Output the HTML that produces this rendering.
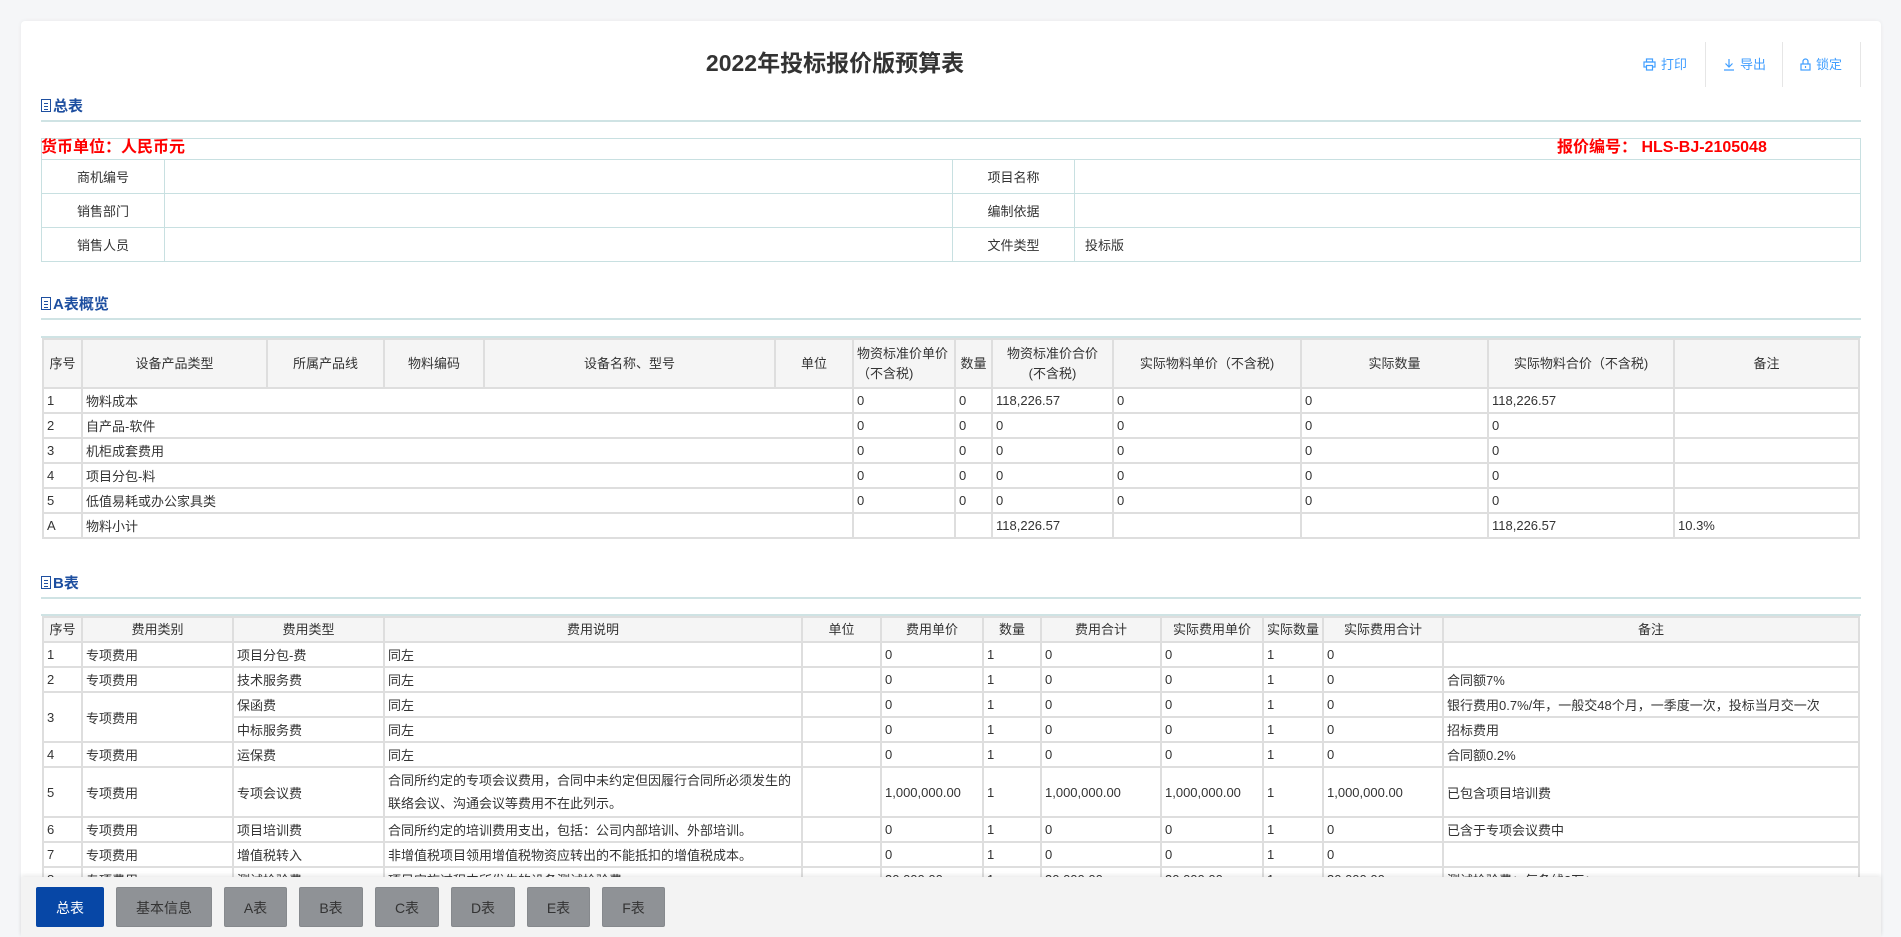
<!DOCTYPE html>
<html><head><meta charset="utf-8">
<style>
*{box-sizing:border-box;margin:0;padding:0}
html,body{width:1901px;height:937px;overflow:hidden}
body{background:#f5f6f8;font-family:"Liberation Sans","Noto Sans CJK SC",sans-serif;color:#333;font-size:13px;position:relative}
.card{position:absolute;left:21px;top:21px;width:1860px;height:916px;background:#fff;border-radius:4px;box-shadow:0 0 4px rgba(0,0,0,.06)}
.abs{position:absolute}
.title{left:600px;width:470px;top:48px;text-align:center;font-size:23px;font-weight:bold;color:#333;line-height:30px}
.tb{top:42px;height:45px;line-height:45px;color:#409eff;font-size:13px;border-right:1px solid #e6e6e6}
.tb svg{vertical-align:-2px;margin-right:5px}
.sec{left:41px;width:1820px;height:13px;font-size:15px;font-weight:bold;color:#1e4fa0;line-height:16px;border-bottom:2px solid #cfe3e4}
.sec span{position:relative;top:-10px}
.doc{display:inline-block;width:10px;height:13px;border:1.5px solid #1e4fa0;margin-right:2px;vertical-align:-1px;position:relative;top:-10px;background:linear-gradient(#1e4fa0,#1e4fa0) 2px 3px/4px 1px no-repeat,linear-gradient(#1e4fa0,#1e4fa0) 2px 6px/4px 1px no-repeat,linear-gradient(#1e4fa0,#1e4fa0) 2px 9px/4px 1px no-repeat}
table{border-collapse:collapse;table-layout:fixed;position:absolute}
.t0 td{border:1.5px solid #c8e0e1;height:34px;font-size:13px}
.t0 td.l{text-align:center}
.t0 td.v{padding-left:10px}
.ta td,.ta th,.tb2 td,.tb2 th{border:2px solid #dedede;font-size:13px;padding:0 3px;height:25px;white-space:nowrap;overflow:hidden;font-weight:normal}
.ta th,.tb2 th{background:#f5f5f5;text-align:center;line-height:20px}
.tb2 td.w{white-space:normal;line-height:23px;padding:1px 3px}
.bar{position:absolute;left:21px;top:877px;width:1860px;height:60px;background:#f3f3f3;box-shadow:0 -2px 4px rgba(0,0,0,.08)}
.btn{position:absolute;top:10px;height:40px;line-height:40px;text-align:center;background:#8f9296;color:#333;font-size:14px;border-radius:2px;border:1px solid #86898d}
.btn.on{background:#0747a6;color:#fff;border-color:#0747a6}
</style></head><body>
<div class="card"></div>
<div class="abs title">2022年投标报价版预算表</div>
<div class="abs tb" style="left:1643px;width:63px"><svg width="13" height="13" viewBox="0 0 13 13" fill="none" stroke="#409eff" stroke-width="1.2"><rect x="3.5" y="1" width="6" height="3"/><rect x="1" y="4" width="11" height="5"/><rect x="3.5" y="7.5" width="6" height="4.5" fill="#fff"/></svg>打印</div>
<div class="abs tb" style="left:1723px;width:60px"><svg width="12" height="13" viewBox="0 0 12 13" fill="none" stroke="#409eff" stroke-width="1.2"><path d="M6 1v8M2.5 5.5L6 9l3.5-3.5M1 12h10"/></svg>导出</div>
<div class="abs tb" style="left:1800px;width:61px"><svg width="11" height="13" viewBox="0 0 11 13" fill="none" stroke="#409eff" stroke-width="1.2"><path d="M3 6V3.5a2.5 2.5 0 0 1 5 0V6"/><rect x="1" y="6" width="9" height="6"/><path d="M5.5 8v2"/></svg>锁定</div>

<div class="abs sec" style="top:109px"><i class="doc"></i><span>总表</span></div>
<div class="abs" style="left:41px;top:138px;width:1820px;height:22px;border:1.5px solid #c8e0e1;border-bottom:none"></div>
<div class="abs" style="left:41px;top:137px;font-size:16px;font-weight:bold;color:#f00;line-height:22px">货币单位：人民币元</div>
<div class="abs" style="left:1557px;top:137px;font-size:16px;font-weight:bold;color:#f00;line-height:22px">报价编号：&nbsp;HLS-BJ-2105048</div>
<table class="t0" style="left:41px;top:159px;width:1820px">
<colgroup><col style="width:123px"><col style="width:788px"><col style="width:122px"><col></colgroup>
<tr><td class="l">商机编号</td><td></td><td class="l">项目名称</td><td></td></tr>
<tr><td class="l">销售部门</td><td></td><td class="l">编制依据</td><td></td></tr>
<tr><td class="l">销售人员</td><td></td><td class="l">文件类型</td><td class="v">投标版</td></tr>
</table>

<div class="abs sec" style="top:307px"><i class="doc"></i><span>A表概览</span></div>
<div class="abs" style="left:41px;top:336px;width:1820px;height:2px;background:#cfe3e4"></div>
<table class="ta" style="left:42px;top:338px;width:1818px">
<colgroup><col style="width:39px"><col style="width:185px"><col style="width:117px"><col style="width:100px"><col style="width:291px"><col style="width:78px"><col style="width:102px"><col style="width:37px"><col style="width:121px"><col style="width:188px"><col style="width:187px"><col style="width:186px"><col></colgroup>
<tr style="height:49px"><th>序号</th><th>设备产品类型</th><th>所属产品线</th><th>物料编码</th><th>设备名称、型号</th><th>单位</th><th style="white-space:normal;text-align:left">物资标准价单价（不含税)</th><th>数量</th><th style="white-space:normal">物资标准价合价<br>(不含税)</th><th>实际物料单价（不含税)</th><th>实际数量</th><th>实际物料合价（不含税)</th><th>备注</th></tr>
<tr><td>1</td><td colspan="5">物料成本</td><td>0</td><td>0</td><td>118,226.57</td><td>0</td><td>0</td><td>118,226.57</td><td></td></tr>
<tr><td>2</td><td colspan="5">自产品-软件</td><td>0</td><td>0</td><td>0</td><td>0</td><td>0</td><td>0</td><td></td></tr>
<tr><td>3</td><td colspan="5">机柜成套费用</td><td>0</td><td>0</td><td>0</td><td>0</td><td>0</td><td>0</td><td></td></tr>
<tr><td>4</td><td colspan="5">项目分包-料</td><td>0</td><td>0</td><td>0</td><td>0</td><td>0</td><td>0</td><td></td></tr>
<tr><td>5</td><td colspan="5">低值易耗或办公家具类</td><td>0</td><td>0</td><td>0</td><td>0</td><td>0</td><td>0</td><td></td></tr>
<tr><td>A</td><td colspan="5">物料小计</td><td></td><td></td><td>118,226.57</td><td></td><td></td><td>118,226.57</td><td>10.3%</td></tr>
</table>

<div class="abs sec" style="top:586px"><i class="doc"></i><span>B表</span></div>
<div class="abs" style="left:41px;top:614px;width:1820px;height:2px;background:#cfe3e4"></div>
<table class="tb2" style="left:42px;top:616px;width:1818px">
<colgroup><col style="width:39px"><col style="width:151px"><col style="width:151px"><col style="width:418px"><col style="width:79px"><col style="width:102px"><col style="width:58px"><col style="width:120px"><col style="width:102px"><col style="width:60px"><col style="width:120px"><col></colgroup>
<tr><th>序号</th><th>费用类别</th><th>费用类型</th><th>费用说明</th><th>单位</th><th>费用单价</th><th>数量</th><th>费用合计</th><th>实际费用单价</th><th>实际数量</th><th>实际费用合计</th><th>备注</th></tr>
<tr><td>1</td><td>专项费用</td><td>项目分包-费</td><td>同左</td><td></td><td>0</td><td>1</td><td>0</td><td>0</td><td>1</td><td>0</td><td></td></tr>
<tr><td>2</td><td>专项费用</td><td>技术服务费</td><td>同左</td><td></td><td>0</td><td>1</td><td>0</td><td>0</td><td>1</td><td>0</td><td>合同额7%</td></tr>
<tr><td rowspan="2">3</td><td rowspan="2">专项费用</td><td>保函费</td><td>同左</td><td></td><td>0</td><td>1</td><td>0</td><td>0</td><td>1</td><td>0</td><td>银行费用0.7%/年，一般交48个月，一季度一次，投标当月交一次</td></tr>
<tr><td>中标服务费</td><td>同左</td><td></td><td>0</td><td>1</td><td>0</td><td>0</td><td>1</td><td>0</td><td>招标费用</td></tr>
<tr><td>4</td><td>专项费用</td><td>运保费</td><td>同左</td><td></td><td>0</td><td>1</td><td>0</td><td>0</td><td>1</td><td>0</td><td>合同额0.2%</td></tr>
<tr style="height:47px"><td>5</td><td>专项费用</td><td>专项会议费</td><td class="w">合同所约定的专项会议费用，合同中未约定但因履行合同所必须发生的联络会议、沟通会议等费用不在此列示。</td><td></td><td>1,000,000.00</td><td>1</td><td>1,000,000.00</td><td>1,000,000.00</td><td>1</td><td>1,000,000.00</td><td>已包含项目培训费</td></tr>
<tr><td>6</td><td>专项费用</td><td>项目培训费</td><td>合同所约定的培训费用支出，包括：公司内部培训、外部培训。</td><td></td><td>0</td><td>1</td><td>0</td><td>0</td><td>1</td><td>0</td><td>已含于专项会议费中</td></tr>
<tr><td>7</td><td>专项费用</td><td>增值税转入</td><td>非增值税项目领用增值税物资应转出的不能抵扣的增值税成本。</td><td></td><td>0</td><td>1</td><td>0</td><td>0</td><td>1</td><td>0</td><td></td></tr>
<tr><td>8</td><td>专项费用</td><td>测试检验费</td><td>项目实施过程中所发生的设备测试检验费</td><td></td><td>30,000.00</td><td>1</td><td>30,000.00</td><td>30,000.00</td><td>1</td><td>30,000.00</td><td>测试检验费：每条线3万；</td></tr>
</table>

<div class="bar">
<div class="btn on" style="left:15px;width:68px">总表</div>
<div class="btn" style="left:95px;width:96px">基本信息</div>
<div class="btn" style="left:203px;width:63px">A表</div>
<div class="btn" style="left:278px;width:64px">B表</div>
<div class="btn" style="left:354px;width:64px">C表</div>
<div class="btn" style="left:430px;width:64px">D表</div>
<div class="btn" style="left:506px;width:63px">E表</div>
<div class="btn" style="left:581px;width:63px">F表</div>
</div>
</body></html>
